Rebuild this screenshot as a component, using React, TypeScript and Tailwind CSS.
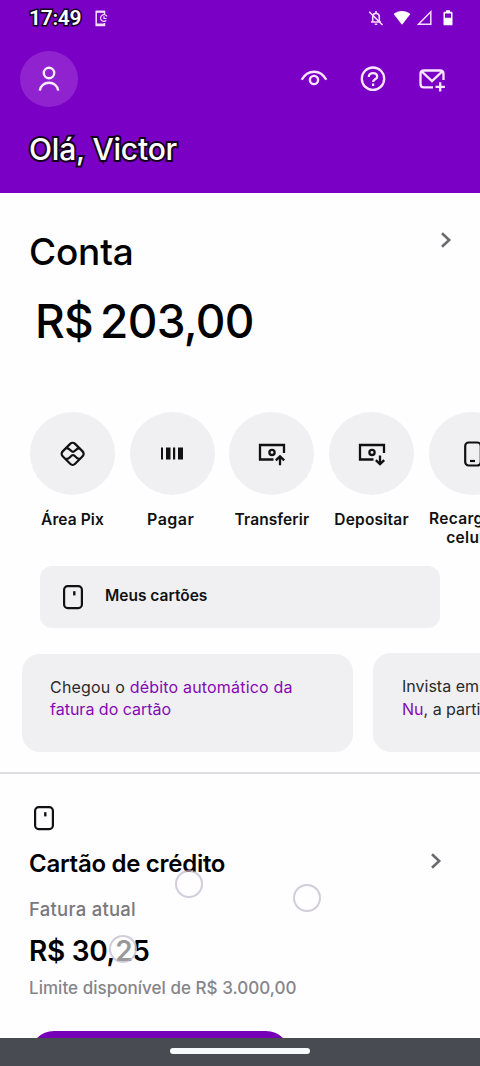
import React from 'react';

interface ShortcutProps {
    label: React.ReactNode;
    labelClass: string;
    children: React.ReactNode;
}

const Shortcut: React.FC<ShortcutProps> = ({ label, labelClass, children }) => (
    <div className="w-[85px] flex-shrink-0 flex flex-col items-center">
        <div className="w-[85px] h-[83px] rounded-[50%] bg-[#f0f0f2] flex items-center justify-center">{children}</div>
        <span className={`text-center font-semibold text-[#111] leading-[18.5px] whitespace-nowrap ${labelClass}`}>{label}</span>
    </div>
);

const CardIcon = () => (
    <svg width="20" height="26" viewBox="0 0 20 26" fill="none" stroke="#111">
        <rect x="1.1" y="2.1" width="17.8" height="22" rx="3.6" strokeWidth="2.2" />
        <path d="M11.3 7.2v4.2" strokeWidth="2.4" />
    </svg>
);

const Chevron = () => (
    <svg width="12" height="16" viewBox="0 0 12 16" fill="none" stroke="#6b6b6f" strokeWidth="2.6">
        <path d="M2 1.2 9.2 8 2 14.8" />
    </svg>
);

// Banknote with an arrow at the bottom right corner
const MoneyIcon = ({ up }: { up: boolean }) => (
    <svg width="28" height="24" viewBox="0 0 28 24" fill="none" stroke="#111" strokeWidth="2.3">
        <path d="M15.5 17.5H2V3h24v8" />
        <circle cx="14" cy="10.4" r="2.6" />
        {up ? <path d="M22 23.3v-8.2M17.8 18.4l4.2-4 4.2 4" /> : <path d="M22 13.5v8.3M17.8 18.2l4.2 4 4.2-4" />}
    </svg>
);

const StatusBar = () => (
    <div className="h-9 pl-[29px] pr-[27px] flex items-center justify-between text-white">
        <div className="flex items-center gap-[14px]">
            <span className="w-[52px] font-['Roboto',sans-serif] text-[21px] leading-[38px] font-semibold tracking-[-0.3px] whitespace-nowrap [-webkit-text-stroke:3px_#160022] [paint-order:stroke_fill]">17:49</span>
            <svg width="13" height="17" viewBox="0 0 13 17" fill="none" stroke="#f6dcff" strokeWidth="1.5">
                <path d="M9.5 4V1.5H1.2v14h8.3V13" />
                <path d="M1 1.8h9M1 14.6h9" strokeWidth="2" />
                <path d="M12 6.5A3.4 3.4 0 1 0 11.3 10.5M9 6.3v2.2h2.5" strokeWidth="1.2" />
            </svg>
        </div>
        <div className="flex items-center">
            <svg className="mr-[9px]" width="16" height="16" viewBox="0 0 15 16" fill="none" stroke="#f6dcff" strokeWidth="1.6">
                <path d="M4.2 12V7.2C4.2 5 5.6 3.4 7.5 3.4s3.3 1.6 3.3 3.8V12M2.5 12h10M7.5 1v2.4M6.2 14.3h2.6" />
                <path d="M.7 1.7 14 15" />
            </svg>
            <svg className="mr-[6px]" width="18" height="16" viewBox="0 0 18 16" fill="#fff">
                <path d="M.6 4.1C5.5-.2 12.500-.2 17.400 4.100L9 14.8z" />
            </svg>
            <svg className="mr-[11px]" width="15" height="16" viewBox="0 0 15 16" fill="none" stroke="#f6dcff" strokeWidth="1.5">
                <path d="M13.8 1.8v12.4H1.5z" />
            </svg>
            <svg width="10" height="16" viewBox="0 0 10 16" fill="#fff">
                <path fillRule="evenodd" d="M3 .2h4v1.600h1.600c.5 0 .9.400.9.900v11.700c0 .500-.400.900-.900.900H1.400a.9.900 0 0 1-.9-.9V2.700c0-.5.400-.9.900-.9H3zM2 3.400v4.400h6v-4.400z" />
            </svg>
        </div>
    </div>
);

const Header = () => (
    <header className="h-[193px] bg-[#7b00c6]">
        <StatusBar />
        <div className="pt-[15px] pl-5 pr-[34px] flex items-center justify-between">
            <div className="w-[58px] h-14 rounded-[50%] bg-[#9022d0] flex items-center justify-center">
                <svg width="22" height="26" viewBox="0 0 22 26" fill="none" stroke="#fcecff" strokeWidth="2.4">
                    <circle cx="11" cy="7" r="5.2" />
                    <path d="M1.800 24.700c.5-5 4.500-8 9.200-8s8.700 3 9.200 8" />
                </svg>
            </div>
            <div className="flex items-center gap-[32px] text-[#fae6ff]">
                <svg width="28" height="26" viewBox="0 0 28 26" fill="none" stroke="currentColor" strokeWidth="2.4">
                    <path d="M1.700 13.800C4.500 8.600 9 5.700 14.200 5.700S23.500 8.600 26.300 13.800" />
                    <circle cx="14" cy="14" r="4.1" />
                </svg>
                <svg width="26" height="26" viewBox="0 0 26 26" fill="none" stroke="currentColor" strokeWidth="2.3">
                    <circle cx="13" cy="12.7" r="11.2" />
                    <path d="M8.800 10.900C8.800 8.500 10.600 7.100 13 7.100s4.200 1.400 4.200 3.600c0 2.800-4.100 2.500-4.100 5.300M13.100 17.500v2.400" />
                </svg>
                <svg width="28" height="26" viewBox="0 0 28 26" fill="none" stroke="currentColor" strokeWidth="2.3">
                    <path d="M15 21.400H6c-2 0-3.500-1.500-3.500-3.500V8c0-2 1.500-3.500 3.500-3.500h16c2 0 3.500 1.500 3.500 3.500v6" />
                    <path d="m3.800 5.500 10.200 9.700L24.200 5.500M22.200 16.200v9.300M17.500 20.900h9.400" />
                </svg>
            </div>
        </div>
        <h1 className="mt-6 pl-[29px] text-[30px] leading-9 font-medium tracking-[-0.2px] text-white [-webkit-text-stroke:4px_#160022] [paint-order:stroke_fill]">Olá, Victor</h1>
    </header>
);

// Faint ring left on screen by a tap
const TapRing = ({ className }: { className: string }) => (
    <div className={`absolute w-7 h-7 rounded-full border-2 border-[#b4acc0]/60 ${className}`} />
);

export default function App() {
    return (
        <div className="relative w-[480px] h-[1066px] flex flex-col overflow-hidden bg-[#fefdff] font-['Inter',sans-serif] text-black">
            <Header />

            <main className="flex-1 min-h-0 overflow-hidden">
                <section className="h-[579px]">
                    <div className="pt-[39px] pl-[29px] pr-[28px] flex items-start justify-between">
                        <h2 className="text-[37px] leading-10 font-medium tracking-[-0.2px]">Conta</h2>
                        <Chevron />
                    </div>
                    <div className="mt-[21px] pl-[35px] flex gap-[5px] text-[46px] leading-[56px] font-[450] whitespace-nowrap">
                        <span className="w-[60px] tracking-[-0.8px]">R$</span>
                        <span className="tracking-[-0.7px]">203,00</span>
                    </div>

                    <div className="mt-[63px] pl-[30px] flex gap-[14.7px]">
                        <Shortcut label="Área Pix" labelClass="mt-4 text-[15.5px] tracking-[0.1px]">
                            <svg width="28" height="28" viewBox="0 0 28 28" fill="none" stroke="#111" strokeWidth="2.2">
                                <rect x="5.2" y="5.2" width="17.6" height="17.6" rx="3.5" transform="rotate(45 14 13.5)" />
                                <path d="M7 8.200c3.600-.8 4.300 3.600 7 3.600s3.400-4.400 7-3.600M7 18.800c3.600.8 4.300-3.600 7-3.600s3.400 4.400 7 3.600" />
                            </svg>
                        </Shortcut>
                        <Shortcut label="Pagar" labelClass="mt-[15px] mr-[3px] text-[16px] tracking-[0.5px]">
                            <svg width="22" height="13" viewBox="0 0 22 13" fill="#111">
                                <path d="M0 .5h2v12H0zM5 .5h4.5v12H5zM12 .5h2.200v12H12zM17 .5h5v12h-5z" />
                            </svg>
                        </Shortcut>
                        <Shortcut label="Transferir" labelClass="mt-4 text-[15.5px] tracking-[0.1px]">
                            <MoneyIcon up />
                        </Shortcut>
                        <Shortcut label="Depositar" labelClass="mt-4 text-[15.5px] tracking-[0.2px]">
                            <MoneyIcon up={false} />
                        </Shortcut>
                        <Shortcut label={<>Recarga de<br />celular</>} labelClass="mt-[15px] ml-[3px] h-[37px] text-[15.5px] tracking-[0.3px]">
                            <svg className="ml-1" width="18" height="26" viewBox="0 0 18 26" fill="none" stroke="#111" strokeWidth="2.2">
                                <rect x="1.2" y="1.5" width="15.6" height="23" rx="3.5" />
                                <path d="M6 20h5" />
                            </svg>
                        </Shortcut>
                    </div>

                    <div className="mt-[19px] ml-10 w-[400px] h-[62px] rounded-xl bg-[#f0f0f2] flex items-center pl-[23px] gap-[22px]">
                        <CardIcon />
                        <span className="-mt-0.5 text-[15.5px] font-semibold text-[#111]">Meus cartões</span>
                    </div>

                    <div className="mt-[25px] pl-[22px] flex items-end gap-5">
                        <p className="w-[331px] h-[98px] flex-shrink-0 rounded-[18px] bg-[#f0f0f3] pt-[22px] pl-7 text-[16px] leading-[22px] text-[#2a2a2d]">
                            <span className="tracking-[0.19px]">Chegou o <span className="text-[#820ab4]">débito automático da</span></span>
                            <br />
                            <span className="text-[#820ab4]">fatura do cartão</span>
                        </p>
                        <p className="w-[331px] h-[99px] flex-shrink-0 rounded-[18px] bg-[#f0f0f3] pt-[22px] pl-[29px] text-[16px] leading-[22.5px] text-[#2a2a2d] whitespace-nowrap">
                            Invista em ações no app<br />
                            <span className="text-[#820ab4]">Nu</span>, a partir de R$ 1
                        </p>
                    </div>
                </section>

                <section className="border-t-2 border-[#dededf] pt-[31px] pl-[29px]">
                    <div className="pl-[5px]"><CardIcon /></div>
                    <div className="mt-[18px] pr-[38px] flex items-start justify-between">
                        <h2 className="text-[24px] leading-[30px] font-semibold tracking-[-0.28px]">Cartão de crédito</h2>
                        <div className="pt-1"><Chevron /></div>
                    </div>
                    <p className="mt-[18px] text-[18.5px] leading-6 font-medium tracking-[0.25px] text-[#79797c]">Fatura atual</p>
                    <p className="mt-[13px] text-[28px] leading-[34px] font-semibold tracking-[-0.3px]">R$ 30,25</p>
                    <p className="mt-[9px] text-[17px] leading-[22px] font-medium tracking-[0.03px] text-[#858588]">Limite disponível de R$ 3.000,00</p>
                    <button className="mt-8 ml-[1px] block w-[260px] h-12 rounded-full bg-[#7500b8]" />
                </section>
            </main>

            <footer className="h-7 flex-shrink-0 bg-[#484b52] flex justify-center pt-[10px]">
                <div className="w-[140px] h-[6px] rounded-full bg-[#f6fafb]" />
            </footer>

            <TapRing className="left-[175px] top-[870px] bg-white/20" />
            <TapRing className="left-[293px] top-[884px] bg-white/20" />
            <TapRing className="left-[109px] top-[935px] bg-white/60" />
        </div>
    );
}
